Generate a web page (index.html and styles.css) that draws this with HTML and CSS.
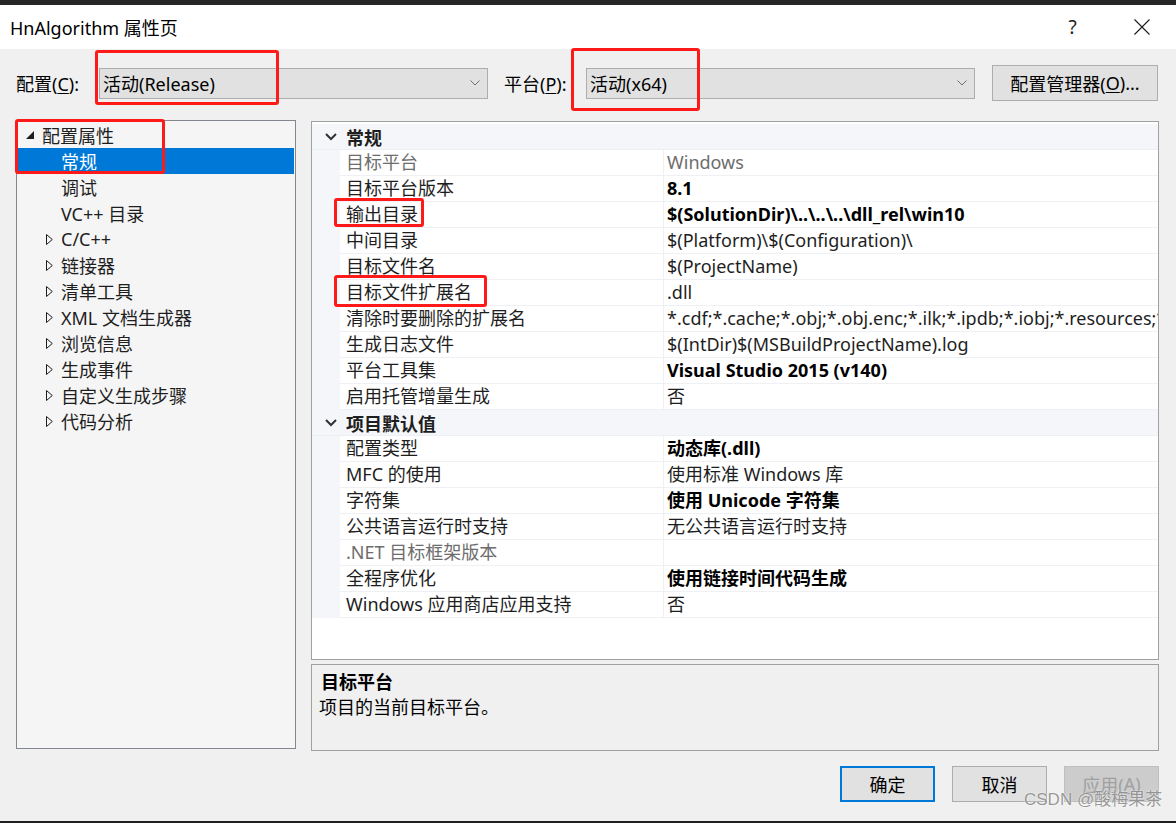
FILE: index.html
```html
<!DOCTYPE html>
<html lang="zh-CN">
<head>
<meta charset="utf-8">
<title>HnAlgorithm 属性页</title>
<link rel="stylesheet" href="styles.css">
</head>
<body>
<div class="topbar"></div>
<div class="titlebar">
  <div class="title">HnAlgorithm 属性页</div>
  <div class="cap-btn help">?</div>
  <div class="cap-btn close">
    <svg width="16" height="16" viewBox="0 0 16 16"><path d="M0.5 0.5 L15.5 15.5 M15.5 0.5 L0.5 15.5" stroke="#1a1a1a" stroke-width="1.1" fill="none"/></svg>
  </div>
</div>
<div class="main">
  <div class="cfgrow">
    <div class="lbl lbl-cfg">配置(<u>C</u>):</div>
    <div class="combo">
      <span class="combo-text">活动(Release)</span>
      <svg class="combo-chev" width="10" height="6" viewBox="0 0 10 6"><polyline points="0.5,0.5 5,5 9.5,0.5" stroke="#707070" fill="none"/></svg>
    </div>
    <div class="lbl lbl-plat">平台(<u>P</u>):</div>
    <div class="combo">
      <span class="combo-text">活动(x64)</span>
      <svg class="combo-chev" width="10" height="6" viewBox="0 0 10 6"><polyline points="0.5,0.5 5,5 9.5,0.5" stroke="#707070" fill="none"/></svg>
    </div>
    <div class="btn btn-mgr">配置管理器(<u>O</u>)...</div>
  </div>

  <div class="content">
    <div class="tree">
      <div class="titem lvl0"><span class="tog"><svg width="8" height="8" viewBox="0 0 8 8"><polygon points="8,0 8,8 0,8" fill="#1e1e1e"/></svg></span>配置属性</div>
      <div class="titem lvl1 sel"><span class="tog"></span>常规</div>
      <div class="titem lvl1"><span class="tog"></span>调试</div>
      <div class="titem lvl1"><span class="tog"></span>VC++ 目录</div>
      <div class="titem lvl1"><span class="tog"><svg width="7" height="11" viewBox="0 0 7 11"><polygon points="0.5,0.5 6.3,5.5 0.5,10.5" fill="none" stroke="#1e1e1e"/></svg></span>C/C++</div>
      <div class="titem lvl1"><span class="tog"><svg width="7" height="11" viewBox="0 0 7 11"><polygon points="0.5,0.5 6.3,5.5 0.5,10.5" fill="none" stroke="#1e1e1e"/></svg></span>链接器</div>
      <div class="titem lvl1"><span class="tog"><svg width="7" height="11" viewBox="0 0 7 11"><polygon points="0.5,0.5 6.3,5.5 0.5,10.5" fill="none" stroke="#1e1e1e"/></svg></span>清单工具</div>
      <div class="titem lvl1"><span class="tog"><svg width="7" height="11" viewBox="0 0 7 11"><polygon points="0.5,0.5 6.3,5.5 0.5,10.5" fill="none" stroke="#1e1e1e"/></svg></span>XML 文档生成器</div>
      <div class="titem lvl1"><span class="tog"><svg width="7" height="11" viewBox="0 0 7 11"><polygon points="0.5,0.5 6.3,5.5 0.5,10.5" fill="none" stroke="#1e1e1e"/></svg></span>浏览信息</div>
      <div class="titem lvl1"><span class="tog"><svg width="7" height="11" viewBox="0 0 7 11"><polygon points="0.5,0.5 6.3,5.5 0.5,10.5" fill="none" stroke="#1e1e1e"/></svg></span>生成事件</div>
      <div class="titem lvl1"><span class="tog"><svg width="7" height="11" viewBox="0 0 7 11"><polygon points="0.5,0.5 6.3,5.5 0.5,10.5" fill="none" stroke="#1e1e1e"/></svg></span>自定义生成步骤</div>
      <div class="titem lvl1"><span class="tog"><svg width="7" height="11" viewBox="0 0 7 11"><polygon points="0.5,0.5 6.3,5.5 0.5,10.5" fill="none" stroke="#1e1e1e"/></svg></span>代码分析</div>
    </div>

    <div class="right">
      <div class="grid">
        <div class="cat"><span class="cat-chev"><svg width="12" height="8" viewBox="0 0 12 8"><polyline points="1,1 6,6 11,1" fill="none" stroke="#333" stroke-width="2"/></svg></span><span class="cat-name">常规</span></div>
        <div class="row"><div class="gut"></div><div class="name dim">目标平台</div><div class="val dim">Windows</div></div>
        <div class="row"><div class="gut"></div><div class="name">目标平台版本</div><div class="val b">8.1</div></div>
        <div class="row"><div class="gut"></div><div class="name">输出目录</div><div class="val b">$(SolutionDir)\..\..\..\dll_rel\win10</div></div>
        <div class="row"><div class="gut"></div><div class="name">中间目录</div><div class="val">$(Platform)\$(Configuration)\</div></div>
        <div class="row"><div class="gut"></div><div class="name">目标文件名</div><div class="val">$(ProjectName)</div></div>
        <div class="row"><div class="gut"></div><div class="name">目标文件扩展名</div><div class="val">.dll</div></div>
        <div class="row"><div class="gut"></div><div class="name">清除时要删除的扩展名</div><div class="val">*.cdf;*.cache;*.obj;*.obj.enc;*.ilk;*.ipdb;*.iobj;*.resources;*.tlb;*.tli;*.tlh;*.tmp;*.rsp;*.pgc;*.pgd;*.meta;*.tlog;*.manifest;*.res;*.pch;*.exp;*.idb;*.rep;*.xdc;*.pdb;*_manifest.rc;*.bsc;*.sbr;*.xml;*.metagen;*.bi</div></div>
        <div class="row"><div class="gut"></div><div class="name">生成日志文件</div><div class="val">$(IntDir)$(MSBuildProjectName).log</div></div>
        <div class="row"><div class="gut"></div><div class="name">平台工具集</div><div class="val b">Visual Studio 2015 (v140)</div></div>
        <div class="row"><div class="gut"></div><div class="name">启用托管增量生成</div><div class="val">否</div></div>
        <div class="cat"><span class="cat-chev"><svg width="12" height="8" viewBox="0 0 12 8"><polyline points="1,1 6,6 11,1" fill="none" stroke="#333" stroke-width="2"/></svg></span><span class="cat-name">项目默认值</span></div>
        <div class="row"><div class="gut"></div><div class="name">配置类型</div><div class="val b">动态库(.dll)</div></div>
        <div class="row"><div class="gut"></div><div class="name">MFC 的使用</div><div class="val">使用标准 Windows 库</div></div>
        <div class="row"><div class="gut"></div><div class="name">字符集</div><div class="val b">使用 Unicode 字符集</div></div>
        <div class="row"><div class="gut"></div><div class="name">公共语言运行时支持</div><div class="val">无公共语言运行时支持</div></div>
        <div class="row"><div class="gut"></div><div class="name dim">.NET 目标框架版本</div><div class="val"></div></div>
        <div class="row"><div class="gut"></div><div class="name">全程序优化</div><div class="val b">使用链接时间代码生成</div></div>
        <div class="row"><div class="gut"></div><div class="name">Windows 应用商店应用支持</div><div class="val">否</div></div>
      </div>
      <div class="desc">
        <div class="desc-title">目标平台</div>
        <div class="desc-text">项目的当前目标平台。</div>
      </div>
    </div>
  </div>

  <div class="btnrow">
    <div class="btn btn-dlg btn-ok">确定</div>
    <div class="btn btn-dlg">取消</div>
    <div class="btn btn-dlg btn-dis">应用(<u>A</u>)</div>
  </div>
</div>
<div class="bottombar"></div>

<div class="mark mark1"></div>
<div class="mark mark2"></div>
<div class="mark mark3"></div>
<div class="mark mark4"></div>
<div class="mark mark5"></div>
<div class="watermark">CSDN @酸梅果茶</div>
</body>
</html>
```

FILE: styles.css
```css
* { box-sizing: border-box; }

html, body { margin: 0; padding: 0; }

body {
  width: 1176px;
  height: 823px;
  overflow: hidden;
  position: relative;
  background: #f0f0f0;
  color: #000;
  font-family: "Noto Sans", "Noto Sans CJK SC", sans-serif;
  font-size: 18px;
}

u { text-decoration: underline; text-underline-offset: 2px; text-decoration-thickness: 1px; }

.topbar { height: 5px; background: #262626; }
.bottombar { height: 2px; background: #1e1e1e; }

.titlebar {
  height: 44px;
  background: #fff;
  display: flex;
  align-items: center;
  padding-left: 10px;
}
.title { flex: 1; font-size: 18px; color: #000; }
.cap-btn {
  width: 69px;
  height: 44px;
  display: flex;
  align-items: center;
  justify-content: center;
}
.help { font-size: 19px; color: #1a1a1a; }

.main {
  height: 772px;
  padding: 16px 17px 0 16px;
  display: flex;
  flex-direction: column;
}

.cfgrow { display: flex; align-items: center; height: 36px; }
.lbl { color: #000; }
.lbl-cfg { width: 83px; }
.lbl-plat { width: 82px; margin-left: 16px; }

.combo {
  width: 389px;
  height: 31px;
  background: #e1e1e1;
  border: 1px solid #adadad;
  display: flex;
  align-items: center;
  padding: 0 7px 0 3px;
}
.combo-text { flex: 1; white-space: nowrap; }
.combo-chev { display: block; }

.btn {
  height: 36px;
  display: flex;
  align-items: center;
  justify-content: center;
  background: #e1e1e1;
  border: 1px solid #adadad;
  white-space: nowrap;
}
.btn-mgr { width: 166px; margin-left: 17px; }

.content { display: flex; gap: 15px; margin-top: 19px; }

.tree {
  width: 280px;
  height: 629px;
  border: 1px solid #828790;
  background: #f5f5f5;
  padding-top: 1px;
  color: #1e1e1e;
}
.titem {
  height: 26px;
  display: flex;
  align-items: center;
  white-space: nowrap;
  margin-right: 1px;
}
.titem .tog {
  width: 18px;
  height: 26px;
  display: flex;
  align-items: center;
  padding-left: 2px;
}
.titem.lvl0 .tog { padding-left: 2px; }
.titem.lvl0 { padding-left: 7px; }
.titem.lvl1 { padding-left: 26px; }
.titem.lvl1 .tog { padding-left: 3px; }
.titem.sel { background: #0078d7; color: #fff; }

.right {
  width: 848px;
  display: flex;
  flex-direction: column;
  gap: 4px;
  margin-top: 1px;
}

.grid {
  height: 539px;
  border: 1px solid #a0a0a0;
  background: #fff;
  padding-top: 2px;
  overflow: hidden;
  color: #1e1e1e;
}
.cat {
  height: 26px;
  display: flex;
  align-items: center;
  background: #f4f6f9;
  border-bottom: 1px solid #eceff3;
}
.cat-chev { width: 34px; display: flex; justify-content: center; padding-left: 4px; }
.cat-name { font-weight: bold; color: #1e1e1e; }

.row {
  height: 26px;
  display: grid;
  grid-template-columns: 28px 324px 1fr;
}
.gut { background: #f4f6f9; }
.name, .val {
  border-bottom: 1px solid #eef0f3;
  white-space: nowrap;
  overflow: hidden;
  display: flex;
  align-items: center;
  line-height: 25px;
}
.name { padding-left: 6px; border-right: 1px solid #eef0f3; }
.val { padding-left: 3px; }
.dim { color: #6d6d6d; }
.b { font-weight: bold; color: #000; }

.desc {
  height: 87px;
  border: 1px solid #a0a0a0;
  background: #f0f0f0;
  padding: 5px 7px;
  line-height: 25px;
}
.desc-title { font-weight: bold; padding-left: 2px; }

.btnrow {
  display: flex;
  justify-content: flex-end;
  gap: 17px;
  margin-top: 15px;
}
.btn-dlg { width: 95px; }
.btn-ok { border: 2px solid #0078d7; }
.btn-dis { background: #cccccc; border-color: #bfbfbf; color: #a0a0a0; }

.mark {
  position: absolute;
  border: 3px solid #ff1a1a;
  border-radius: 3px;
}
.mark1 { left: 95px; top: 50px; width: 184px; height: 55px; }
.mark2 { left: 571px; top: 48px; width: 129px; height: 63px; }
.mark3 { left: 15px; top: 119px; width: 150px; height: 55px; }
.mark4 { left: 334px; top: 198px; width: 90px; height: 29px; }
.mark5 { left: 334px; top: 275px; width: 153px; height: 32px; }

.watermark {
  position: absolute;
  left: 1024px;
  top: 785px;
  font-size: 17px;
  color: rgba(120, 120, 120, 0.75);
  text-shadow: 0 0 2px #fff;
  white-space: nowrap;
  font-family: "Liberation Sans", "Noto Sans CJK SC", sans-serif;
}
```
